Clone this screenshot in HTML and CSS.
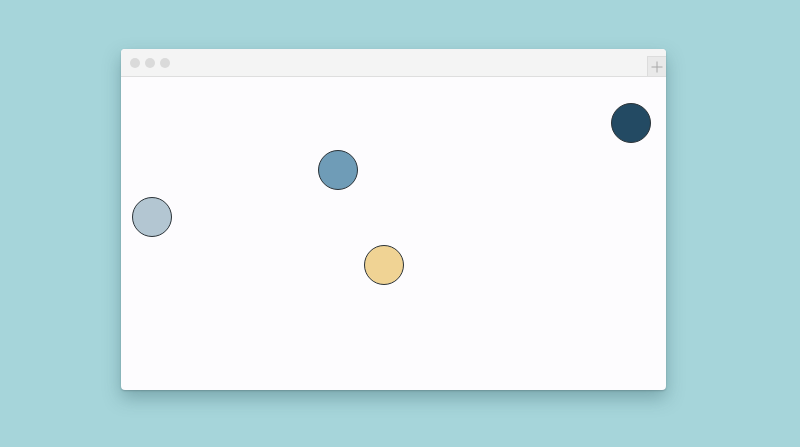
FILE: index.html
```html
<!DOCTYPE html>
<html>
<head>
<meta charset="utf-8">
<link rel="stylesheet" href="styles.css">
</head>
<body>
<div class="window">
  <div class="titlebar">
    <div class="dots"><span class="dot"></span><span class="dot"></span><span class="dot"></span></div>
    <div class="newtab"><svg width="12" height="12" viewBox="0 0 12 12"><path d="M6 0.5V11.5M0.5 6H11.5" stroke="#a8a8a8" stroke-width="1" fill="none"/></svg></div>
  </div>
  <div class="canvas">
    <div class="ball navy" style="left:490px;top:26px"></div>
    <div class="ball blue" style="left:197px;top:73px"></div>
    <div class="ball light" style="left:11px;top:120px"></div>
    <div class="ball yellow" style="left:243px;top:168px"></div>
  </div>
</div>
</body>
</html>
```
FILE: styles.css
```css
html, body {
  margin: 0;
  padding: 0;
  background: #a6d5da;
  font-family: "Liberation Sans", Arial, sans-serif;
  width: 800px;
  height: 447px;
  overflow: hidden;
}
.window {
  margin: 49px 0 0 121px;
  width: 545px;
  height: 341px;
  background: #fdfcfe;
  border-radius: 4px;
  box-shadow: 0 8px 18px rgba(40, 80, 90, 0.35), 0 1px 2px rgba(0,0,0,0.2);
  display: flex;
  flex-direction: column;
  overflow: hidden;
}
.titlebar {
  height: 27px;
  flex: none;
  background: #f4f4f4;
  border-bottom: 1px solid #dedede;
  display: flex;
  align-items: flex-end;
  justify-content: space-between;
}
.dots {
  display: flex;
  gap: 5px;
  padding: 0 0 8px 9px;
}
.dot {
  width: 10px;
  height: 10px;
  border-radius: 50%;
  background: #dadada;
}
.newtab {
  width: 18px;
  height: 19px;
  background: #e9e9e9;
  border-left: 1px solid #dcdcdc;
  border-top: 1px solid #dcdcdc;
  display: flex;
  align-items: center;
  justify-content: center;
}
.canvas {
  position: relative;
  flex: 1;
}
.ball {
  position: absolute;
  width: 38px;
  height: 38px;
  border-radius: 50%;
  border: 1px solid #2b3338;
}
.navy { background: #234a63; }
.blue { background: #6f9cb7; }
.light { background: #b3c6d2; }
.yellow { background: #f0d394; }
```
